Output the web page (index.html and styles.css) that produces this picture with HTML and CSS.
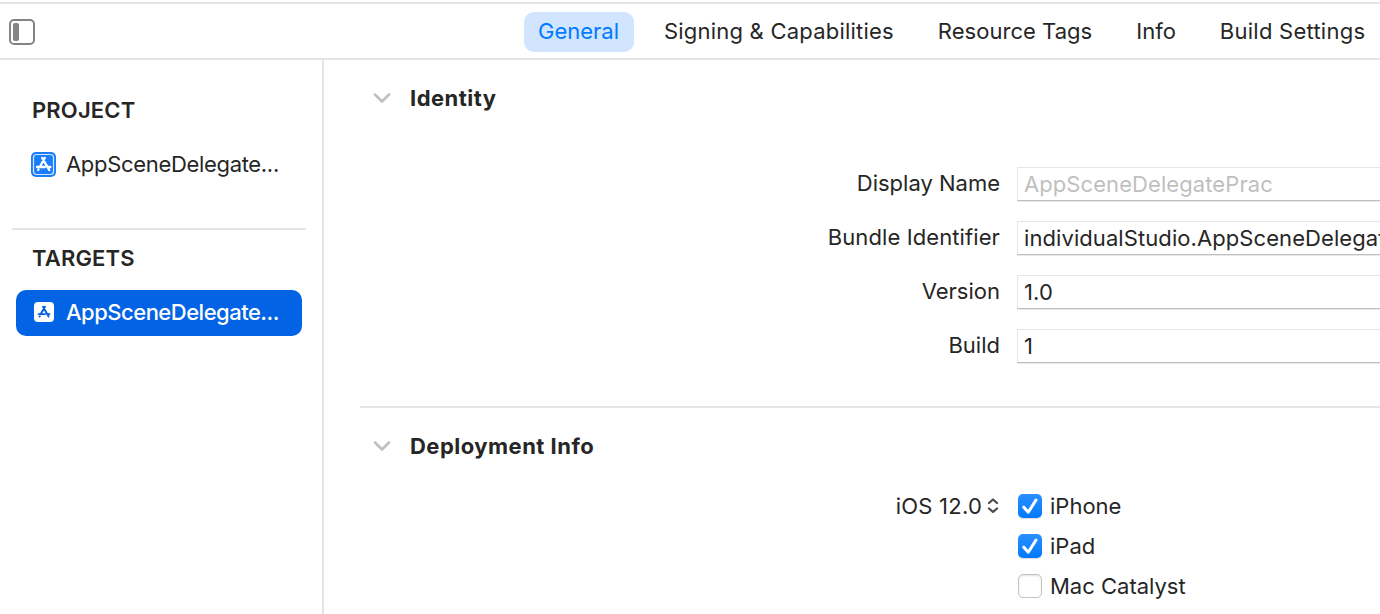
FILE: index.html
```html
<!DOCTYPE html>
<html lang="en">
<head>
<meta charset="utf-8">
<title>AppSceneDelegatePrac - General</title>
<link rel="stylesheet" href="styles.css">
</head>

<body>
<header class="topbar">
    <button class="panel-toggle" aria-label="Toggle sidebar">
        <svg width="26" height="26" viewBox="0 0 26 26">
            <rect x="1" y="1" width="24" height="24" rx="4" fill="none" stroke="#848484" stroke-width="2"/>
            <rect x="4" y="4" width="6" height="18" rx="2" fill="#848484"/>
        </svg>
    </button>
    <nav class="tabs">
        <a class="tab active">General</a>
        <a class="tab tab-signing">Signing &amp; Capabilities</a>
        <a class="tab tab-tags">Resource Tags</a>
        <a class="tab">Info</a>
        <a class="tab tab-build">Build Settings</a>
    </nav>
</header>

<div class="layout">
    <aside class="sidebar">
        <h2 class="group-title">PROJECT</h2>
        <div class="item">
            <svg class="item-icon" width="26" height="26" viewBox="0 0 26 26">
                <rect width="25" height="25" x="0" y="1" rx="5" fill="#1a7efb"/>
                <rect x="2.5" y="3.5" width="20" height="20" rx="3" fill="none" stroke="#d6e8ff" stroke-width="1.2"/>
                <g stroke="#fff" stroke-width="2.3" stroke-linecap="round" fill="none">
                    <path d="M11.2 6.9L18.2 19M13.8 6.9L8.8 16M6 16h8M17.2 16h2.2M7.5 18.5l-.3.5"/>
                </g>
            </svg>
            <span class="item-name">AppSceneDelegate...</span>
        </div>
        <hr class="sidebar-line">
        <h2 class="group-title">TARGETS</h2>
        <div class="item selected">
            <svg class="item-icon" width="26" height="26" viewBox="0 0 26 26">
                <rect x="3" y="3" width="20" height="20" rx="4" fill="#fff"/>
                <g stroke="#0263e4" stroke-width="1.9" stroke-linecap="round" fill="none">
                    <path d="M12 7.7L17.6 17.5M14 7.7L9.7 15.1M7.6 15.1h6.4M16.8 15.1h1.7M8.8 17.2l-.3.4"/>
                </g>
            </svg>
            <span class="item-name">AppSceneDelegate...</span>
        </div>
    </aside>

    <main class="content">
        <section class="section identity">
            <h3 class="section-title">
                <svg class="chevron" width="18" height="12" viewBox="0 0 18 12"><path d="M2 2.5l7 7 7-7"/></svg>
                Identity
            </h3>
            <div class="form">
                <label for="display">Display Name</label>
                <input id="display" class="field" type="text" placeholder="AppSceneDelegatePrac">
                <label for="bundle" class="label-bundle">Bundle Identifier</label>
                <input id="bundle" class="field" type="text" value="individualStudio.AppSceneDelegatePrac">
                <label for="version">Version</label>
                <input id="version" class="field" type="text" value="1.0">
                <label for="build">Build</label>
                <input id="build" class="field" type="text" value="1">
            </div>
        </section>

        <section class="section deployment">
            <h3 class="section-title">
                <svg class="chevron" width="18" height="12" viewBox="0 0 18 12"><path d="M2 2.5l7 7 7-7"/></svg>
                Deployment Info
            </h3>
            <div class="devices">
                <div class="os-version">
                    <span>iOS 12.0</span>
                    <svg width="12" height="18" viewBox="0 0 12 18"><path d="M2 6L6 2.5 10 6M2 11.5L6 15l4-3.5"/></svg>
                </div>
                <div class="checks">
                    <div class="check">
                        <span class="box checked"><svg width="24" height="24" viewBox="0 0 24 24"><path d="M5.8 13.2l4.5 5L18 6"/></svg></span>
                        <span>iPhone</span>
                    </div>
                    <div class="check">
                        <span class="box checked"><svg width="24" height="24" viewBox="0 0 24 24"><path d="M5.8 13.2l4.5 5L18 6"/></svg></span>
                        <span>iPad</span>
                    </div>
                    <div class="check">
                        <span class="box"></span>
                        <span>Mac Catalyst</span>
                    </div>
                </div>
            </div>
        </section>
    </main>
</div>
</body>
</html>
```
FILE: styles.css
```css
* {
    box-sizing: border-box;
}

body {
    margin: 0;
    padding-top: 2px;
    height: 614px;
    overflow: hidden;
    background: #fff;
    color: #262626;
    font-family: 'Inter', 'Liberation Sans', sans-serif;
    font-size: 22px;
    line-height: 28px;
}

/* top bar */
.topbar {
    display: flex;
    align-items: center;
    height: 58px;
    padding: 2px 0 0 9px;
    border-top: 2px solid #e5e5e5;
    border-bottom: 2px solid #e5e5e5;
}

.panel-toggle {
    width: 26px;
    height: 26px;
    padding: 0;
    border: none;
    background: none;
}

.panel-toggle svg {
    display: block;
}

.tabs {
    display: flex;
    gap: 16px;
    margin-left: 489px;
}

.tab {
    flex: none;
    height: 40px;
    padding: 0 14px;
    border-radius: 10px;
    line-height: 39px;
    white-space: nowrap;
}

.tab.active {
    width: 110px;
    background: #d1e5ff;
    color: #007aff;
}

.tab-signing {
    letter-spacing: 0.21px;
}

.tab-tags {
    letter-spacing: 0.03px;
}

.tab-build {
    letter-spacing: 0.25px;
}

/* columns */
.layout {
    display: flex;
    height: 554px;
}

.sidebar {
    flex: none;
    width: 324px;
    padding: 36px 16px 0 12px;
    border-right: 2px solid #e5e5e5;
}

.group-title {
    margin: 0 0 17px 20px;
    font-size: 22px;
    font-weight: 600;
    line-height: 28px;
    letter-spacing: 0.15px;
}

.item {
    display: flex;
    align-items: center;
    height: 46px;
    margin: 0 4px;
    padding-left: 15px;
    border-radius: 10px;
}

.item.selected {
    margin-top: 18px;
    padding-bottom: 2px;
    background: #0263e4;
    color: #fff;
    font-weight: 500;
}

.item-name {
    margin-left: 9px;
    letter-spacing: -0.32px;
    white-space: nowrap;
}

.item.selected .item-name {
    letter-spacing: -0.5px;
}

.sidebar-line {
    height: 2px;
    margin: 41px 0 14px;
    border: none;
    background: #e5e5e5;
}

.content {
    flex: 1;
    min-width: 0;
    padding-left: 36px;
}

.section-title {
    display: flex;
    align-items: center;
    margin: 0;
    padding-left: 13px;
    font-size: 22px;
    font-weight: 700;
    line-height: 28px;
    letter-spacing: 0.48px;
}

.chevron {
    margin-right: 19px;
}

.chevron path {
    fill: none;
    stroke: #bfbfbf;
    stroke-width: 2.6;
    stroke-linecap: round;
    stroke-linejoin: round;
}

.identity {
    height: 348px;
    padding-top: 24px;
    border-bottom: 2px solid #e5e5e5;
}

.form {
    display: grid;
    grid-template-columns: 640px 420px;
    grid-auto-rows: 36px;
    column-gap: 17px;
    row-gap: 18px;
    margin-top: 55px;
}

.form label {
    text-align: right;
    line-height: 32px;
}

.form .label-bundle {
    letter-spacing: 0.1px;
}

.field {
    height: 34px;
    padding: 0 6px;
    border: 1px solid #e6e6e6;
    border-bottom: 1px solid #bfbfbf;
    box-shadow: 0 1px 0 #e9e9e9;
    background: #fff;
    color: #262626;
    font-family: inherit;
    font-size: 22px;
    letter-spacing: 0.08px;
    outline: none;
}

.field::placeholder {
    color: #bfbfbf;
    opacity: 1;
}

/* deployment */
.deployment {
    padding-top: 24px;
}

.devices {
    display: flex;
    gap: 19px;
    margin-top: 32px;
}

.os-version {
    display: flex;
    justify-content: flex-end;
    align-items: center;
    gap: 5px;
    width: 639px;
    height: 28px;
    letter-spacing: 0.22px;
}

.os-version path {
    fill: none;
    stroke: #4d4d4d;
    stroke-width: 2.3;
    stroke-linecap: round;
    stroke-linejoin: round;
}

.checks {
    display: grid;
    gap: 12px;
}

.check {
    display: flex;
    align-items: center;
    gap: 8px;
    height: 28px;
}

.box {
    width: 24px;
    height: 24px;
    border: 1px solid #c4c4c4;
    border-radius: 5px;
    background: #fff;
    box-shadow: inset 0 1px 2px rgba(0, 0, 0, 0.12);
}

.box.checked {
    border: none;
    background: linear-gradient(#2b8fff, #007aff);
    box-shadow: 0 1px 1px rgba(0, 0, 0, 0.15);
}

.box svg {
    display: block;
}

.box path {
    fill: none;
    stroke: #fff;
    stroke-width: 3;
    stroke-linecap: round;
    stroke-linejoin: round;
}
```
